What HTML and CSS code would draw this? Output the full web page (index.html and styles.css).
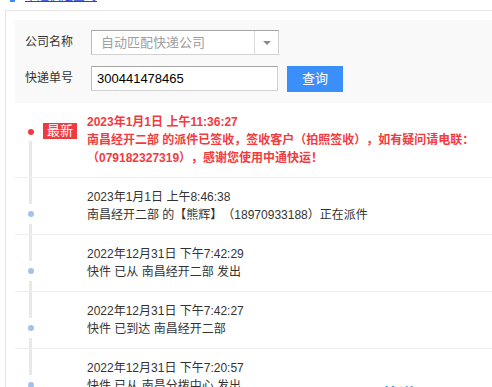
FILE: index.html
```html
<!doctype html>
<html>
<head>
<meta charset="utf-8">
<title>快递查询</title>
<link rel="stylesheet" href="styles.css">
</head>

<body>
<div class="page">
	<div class="top"><span class="top_icon"></span><a href="#">中通快运查询</a></div>

	<div class="box">
		<div class="search">
			<div class="frow">
				<span class="label">公司名称</span>
				<div class="select">
					<span class="select_text">自动匹配快递公司</span>
					<span class="select_btn"><i class="arrow"></i></span>
				</div>
			</div>
			<div class="frow">
				<span class="label">快递单号</span>
				<input class="num" type="text" value="300441478465">
				<span class="btn">查询</span>
			</div>
		</div>

		<ul class="list">
			<span class="vline"></span>
			<li class="now">
				<span class="dot"></span>
				<span class="tag">最新</span>
				<p>2023年1月1日 上午11:36:27</p>
				<p>南昌经开二部 的派件已签收，签收客户（拍照签收），如有疑问请电联：（079182327319），感谢您使用中通快运！</p>
			</li>
			<li>
				<span class="dot"></span>
				<p>2023年1月1日 上午8:46:38</p>
				<p>南昌经开二部 的【熊辉】（18970933188）正在派件</p>
			</li>
			<li>
				<span class="dot"></span>
				<p>2022年12月31日 下午7:42:29</p>
				<p>快件 已从 南昌经开二部 发出</p>
			</li>
			<li>
				<span class="dot"></span>
				<p>2022年12月31日 下午7:42:27</p>
				<p>快件 已到达 南昌经开二部</p>
			</li>
			<li>
				<span class="dot"></span>
				<p>2022年12月31日 下午7:20:57</p>
				<p>快件 已从 南昌分拨中心 发出</p>
			</li>
		</ul>
	</div>

	<div class="logo"><b class="l1">快递</b><b class="l2">100</b><span class="l3">提供数据</span></div>
</div>
</body>
</html>
```

FILE: styles.css
```css
*{ padding:0; margin:0;}
body{ background-color:#fff; font-family:"Liberation Sans","Noto Sans CJK SC",sans-serif; font-size:12px; color:#333; text-spacing-trim:space-all;}
ul{ list-style:none;}
.page{ height:387px; overflow:hidden; position:relative;}

.top{ height:12px; line-height:12px; margin:-10px 0 8px 0; padding-left:10px; font-size:12px;}
.top_icon{ display:inline-block; width:5px; height:10px; background-color:#3b8bff; vertical-align:middle;}
.top a{ color:#2740d6; margin-left:10px; text-decoration:underline;}

.box{ margin-left:5px; border-top:1px solid #e4e4e4; border-left:1px solid #e4e4e4; padding:9px 0 0 9px;}

.search{ background-color:#f9f9f9; padding:10px 0 11px 10px; display:flex; flex-direction:column; gap:11px;}
.frow{ display:flex; align-items:flex-start;}
.label{ width:66px; line-height:25px; font-size:12px;}
.select{ width:186px; height:23px; border:1px solid #d2d2d2; border-top-color:#a6a6a6; border-left-color:#bdbdbd; background-color:#fff; display:flex;}
.select_text{ flex:1; line-height:23px; padding-left:9px; font-size:13px; color:#a0a0a0;}
.select_btn{ width:23px; border-left:1px solid #dcdcdc; display:flex; align-items:center; justify-content:center;}
.arrow{ width:0; height:0; border-left:4px solid transparent; border-right:4px solid transparent; border-top:4px solid #8a8a8a;}
.num{ width:180px; height:23px; border:1px solid #d2d2d2; border-top-color:#a6a6a6; border-left-color:#bdbdbd; padding:0 0 0 5px; font-family:"Liberation Sans",sans-serif; font-size:13px; color:#000; outline:none;}
.btn{ width:56px; height:26px; line-height:26px; margin-left:9px; background-color:#3b8ffb; color:#fff; text-align:center; font-size:13px;}

.list{ position:relative;}
.vline{ position:absolute; left:14px; top:38px; bottom:0; width:3px; background-color:#e8e8e8;}
.list li{ position:relative; padding:10px 0 10px 72px; border-bottom:1px solid #eeeeee; line-height:18px; font-size:12px;}
.dot{ position:absolute; left:13px; top:33px; width:6px; height:6px; border-radius:50%; background-color:#a5c0ea; box-shadow:0 0 0 7px #fff;}
.now .dot{ top:26px; background-color:#f23b3f; box-shadow:none;}
.tag{ position:absolute; left:28px; top:20px; width:34px; height:16px; line-height:16px; text-align:center; background-color:#ee3b40; color:#fff; font-size:13px; font-weight:normal;}
.now{ color:#f23b3f; font-weight:bold; padding-right:8px;}

.logo{ position:absolute; left:383px; top:385px; line-height:20px; white-space:nowrap;}
.l1{ color:#1a8cff; font-size:16px;}
.l2{ color:#ff8c1a; font-size:16px;}
.l3{ color:#999; font-size:12px; margin-left:8px;}
```
